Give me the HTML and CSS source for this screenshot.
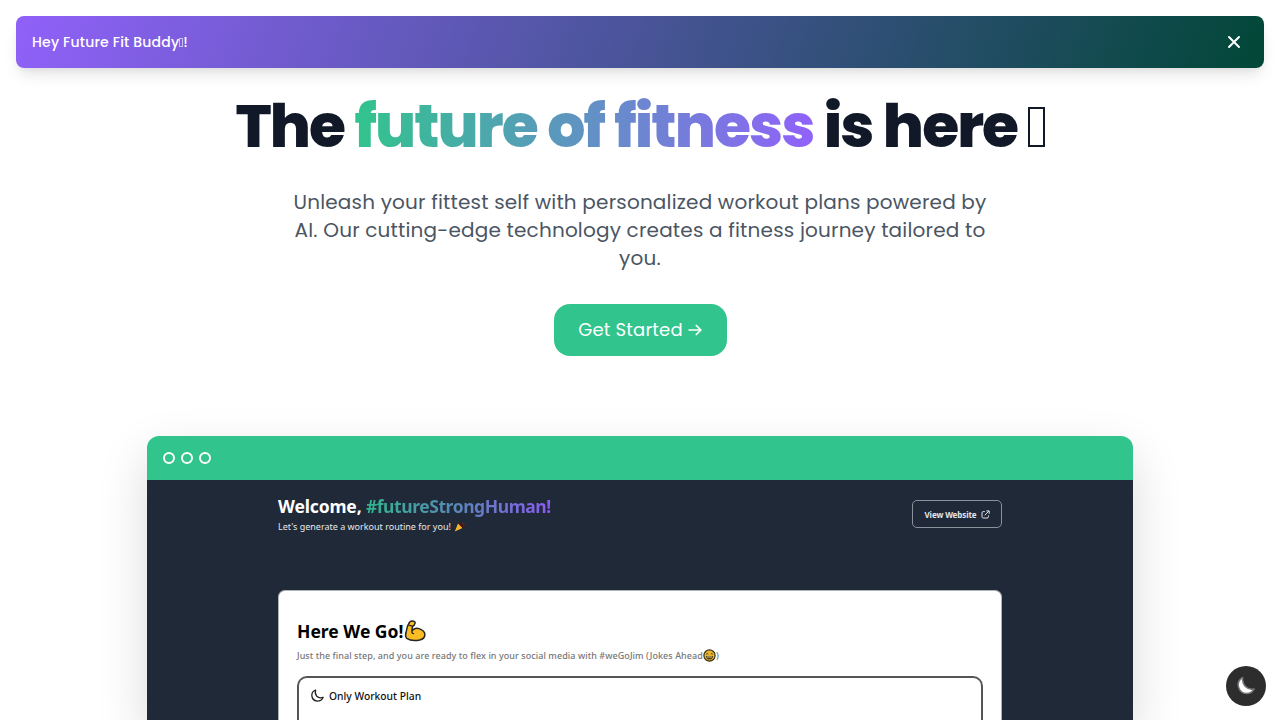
FILE: index.html
```html
<!DOCTYPE html>
<html lang="en">
<head>
    <meta charset="UTF-8">
    <title>The future of fitness is here</title>
    <link rel="stylesheet" href="styles.css">
</head>
<body>
<div class="banner">
    <p class="banner-text">Hey Future Fit Buddy<span class="glyph-small"></span>!</p>
    <button class="banner-close" aria-label="Close">
        <svg width="20" height="20" viewBox="0 0 20 20" fill="none" stroke="#fff" stroke-width="2" stroke-linecap="round"><path d="M5 5l10 10M15 5L5 15"/></svg>
    </button>
</div>

<div class="hero">
    <h1 class="title">The <span class="gradient">future of fitness</span> is here <span class="glyph-big"></span></h1>
    <p class="lead">Unleash your fittest self with personalized workout plans powered by<br>AI. Our cutting-edge technology creates a fitness journey tailored to<br>you.</p>
    <a class="start" href="#"><span>Get Started</span>
        <svg width="14" height="14" viewBox="0 0 14 14" fill="none" stroke="#fff" stroke-width="1.7"><path d="M.5 7h12M7.8 2l5 5-5 5"/></svg>
    </a>
</div>

<div class="window">
    <div class="window-bar"><i></i><i></i><i></i></div>
    <div class="screen">
        <div class="screen-head">
            <div>
                <h2 class="welcome">Welcome, <span class="hashtag">#futureStrongHuman!</span></h2>
                <p class="sub"><span>Let's generate a workout routine for you!</span>
                    <svg width="12" height="10" viewBox="0 0 12 10"><path d="M4 1.5L8.5 6 .8 9.5z" fill="#f5b52e"/><path d="M4.5 1.2L8.5 6l2.5-1-3.4-4z" fill="#4b1710"/><path d="M8 1l2 .5M9 3l2-.5" stroke="#6b2419"/></svg>
                </p>
            </div>
            <a class="visit" href="#"><span>View Website</span>
                <svg width="9" height="9" viewBox="0 0 9 9" fill="none" stroke="#dfe3e8" stroke-width="1"><path d="M3.8 1.6H2.2q-1.2 0-1.2 1.2v4q0 1.2 1.2 1.2h4q1.2 0 1.2-1.2V5.4M5.3.9h2.9v2.9M8 1L3.7 5.3"/></svg>
            </a>
        </div>
        <div class="card">
            <h3 class="card-title"><span>Here We Go!</span>
                <svg width="22" height="22" viewBox="0 0 22 22"><path d="M5.5 2.2Q7 .8 9.6 1.2q1.8.4 1.4 2.2-.4 2-2.3 2.8-.9 2.2-.5 4.3Q11 7.5 15 8.6q5.8 1.9 5.9 6-.2 4.2-5.2 5.4-8 1.7-13-1.6Q1 16.7 2 12.5 2.8 6 5.5 2.2z" fill="#fbbd25" stroke="#252525" stroke-width="1.5" stroke-linejoin="round"/><path d="M8.2 10.5Q7 13 9.5 13.6M5.6 5.4l2.7.7" fill="none" stroke="#252525" stroke-width="1.3" stroke-linecap="round"/></svg>
            </h3>
            <p class="card-sub"><span>Just the final step, and you are ready to flex in your social media with #weGoJim (Jokes Ahead</span><svg width="13" height="13" viewBox="0 0 13 13"><circle cx="6.5" cy="6.5" r="5.6" fill="#e8b431" stroke="#3d3210" stroke-width="1.2"/><path d="M3.2 5.2q1-1.2 2 0M7.8 5.2q1-1.2 2 0" fill="none" stroke="#4a3b10"/><path d="M3 7h7q-.3 3.6-3.5 3.6T3 7z" fill="#4a3b10"/><path d="M4 8h5" stroke="#d8cda9"/></svg>)</p>
            <div class="option">
                <svg width="13" height="13" viewBox="0 0 13 13" fill="none" stroke="#222" stroke-width="1.3" stroke-linejoin="round"><path d="M4.6 1Q.8 2.5.8 6.4q.3 5.2 5.5 5.7 4.2 0 5.8-3.7-4 1.2-6.3-1.2Q3.5 4.6 4.6 1z"/></svg>
                <span>Only Workout Plan</span>
            </div>
        </div>
    </div>
</div>

<button class="theme" aria-label="Toggle theme">
    <svg width="22" height="22" viewBox="0 0 22 22"><path d="M7.6 2.5Q2.2 5.7 3.4 11.6q1.7 6.7 8.3 7 4.7-.1 7.4-4.6-5.4 1-8.7-2.4-3.2-3.7-2.8-9.1z" fill="#fff" stroke="#77787b" stroke-width="1.5" stroke-linejoin="round"/></svg>
</button>
</body>
</html>
```
FILE: styles.css
```css
*{
    margin: 0;
    padding: 0;
    box-sizing: border-box;
}
body{
    background: #fff;
    font-family: Poppins, Inter, sans-serif;
    color: #111827;
}
button{
    border: 0;
    background: none;
}
svg{
    display: block;
    flex: none;
}

.banner{
    height: 52px;
    margin: 16px 16px 0;
    padding: 0 20px 0 16px;
    display: flex;
    align-items: center;
    justify-content: space-between;
    border-radius: 8px;
    background: linear-gradient(110deg, #9061f9, #014737);
    box-shadow: 0 10px 15px -3px rgba(0,0,0,.1), 0 4px 6px -2px rgba(0,0,0,.05);
}
.banner-text{
    color: #fff;
    font-size: 14px;
    font-weight: 500;
    line-height: 20px;
    letter-spacing: .2px;
}
.glyph-small{
    display: inline-block;
    width: 4px;
    height: 9px;
    border: 1px solid rgba(255,255,255,.6);
}
.glyph-big{
    display: inline-block;
    width: 17px;
    height: 40px;
    border: 2px solid #111827;
}

.hero{
    display: flex;
    flex-direction: column;
    align-items: center;
    padding-top: 28px;
    text-align: center;
}
.title{
    height: 60px;
    font-size: 60px;
    line-height: 60px;
    font-weight: 800;
    letter-spacing: -1.9px;
    word-spacing: .8px;
    white-space: nowrap;
}
.gradient{
    background: linear-gradient(to right, #31c48d, #9061f9);
    -webkit-background-clip: text;
    background-clip: text;
    color: transparent;
}
.lead{
    margin-top: 32px;
    color: #4b5563;
    font-size: 20px;
    line-height: 28px;
    letter-spacing: .18px;
    white-space: nowrap;
}
.start{
    display: flex;
    align-items: center;
    justify-content: center;
    gap: 5px;
    width: 173px;
    height: 52px;
    margin-top: 32px;
    padding-bottom: 1px;
    border-radius: 16px;
    background: #31c48d;
    color: #fff;
    font-size: 18px;
    letter-spacing: .2px;
    text-decoration: none;
}

.window{
    width: 986px;
    margin: 80px auto 0;
    border-radius: 12px 12px 0 0;
    box-shadow: 0 20px 50px rgba(0,0,0,.15);
}
.window-bar{
    height: 44px;
    padding-left: 16px;
    display: flex;
    align-items: center;
    gap: 6px;
    border-radius: 12px 12px 0 0;
    background: #31c48d;
}
.window-bar i{
    width: 12px;
    height: 12px;
    border: 2px solid #fff;
    border-radius: 50%;
}
.screen{
    height: 240px;
    padding: 14px 131px 0;
    background: #1f2937;
    font-family: "Noto Sans", sans-serif;
}
.screen-head{
    height: 96px;
    display: flex;
    justify-content: space-between;
    align-items: flex-start;
    color: #fff;
}
.welcome{
    font-size: 17.5px;
    line-height: 24px;
    font-weight: 700;
    letter-spacing: -.15px;
    white-space: nowrap;
}
.hashtag{
    letter-spacing: -.43px;
    background: linear-gradient(to right, #31b58d, #5b86b8 50%, #8a5cf0);
    -webkit-background-clip: text;
    background-clip: text;
    color: transparent;
}
.sub{
    display: flex;
    align-items: center;
    gap: 3px;
    font-size: 9px;
    line-height: 18px;
    color: #e5e7eb;
}
.visit{
    display: flex;
    align-items: center;
    justify-content: center;
    gap: 4px;
    width: 90px;
    height: 28px;
    margin-top: 6px;
    border: 1px solid #8b929c;
    border-radius: 5px;
    color: #e5e7eb;
    font-size: 8px;
    font-weight: 700;
    letter-spacing: -.1px;
    text-decoration: none;
}
.card{
    height: 130px;
    padding: 28px 18px 0;
    border: 1px solid #aeb3ba;
    border-bottom: 0;
    border-radius: 7px 7px 0 0;
    background: #fff;
}
.card-title{
    display: flex;
    align-items: center;
    gap: 1px;
    height: 24px;
    font-size: 17.5px;
    color: #000;
}
.card-sub{
    display: flex;
    align-items: center;
    height: 14px;
    margin-top: 5px;
    font-size: 9px;
    font-weight: 500;
    letter-spacing: .06px;
    color: #777;
}
.option{
    display: flex;
    align-items: flex-start;
    gap: 5px;
    height: 44px;
    margin-top: 14px;
    padding: 11px 12px 0;
    border: 2px solid #555;
    border-bottom: 0;
    border-radius: 10px 10px 0 0;
    font-size: 10.3px;
    line-height: 14px;
    font-weight: 500;
    color: #111;
}
.theme{
    position: fixed;
    right: 14px;
    bottom: 14px;
    width: 40px;
    height: 40px;
    display: flex;
    align-items: center;
    justify-content: center;
    border-radius: 50%;
    background: #2d2d2e;
}
```
